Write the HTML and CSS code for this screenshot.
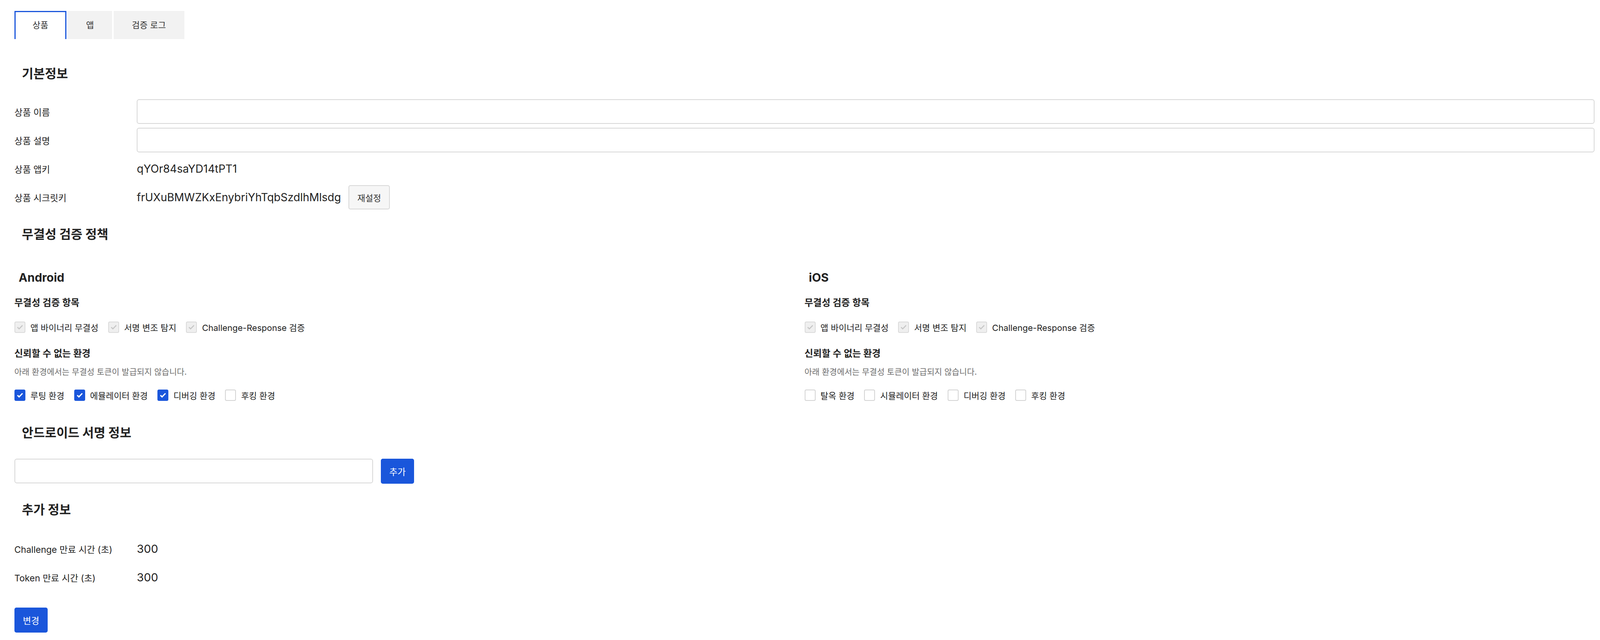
FILE: index.html
```html
<!DOCTYPE html>
<html lang="ko">
	<head>
		<meta charset="UTF-8">
		<title>상품</title>
		<link rel="stylesheet" href="styles.css">
	</head>
	<body>
		<div class="page">
			<ul class="tabs">
				<li class="tab tab-product active">상품</li>
				<li class="tab tab-app">앱</li>
				<li class="tab tab-log">검증 로그</li>
			</ul>

			<!-- 기본정보 -->
			<h2 class="section-title">기본정보</h2>
			<div class="form">
				<div class="row">
					<span class="row-label">상품 이름</span>
					<input class="text-input" type="text">
				</div>
				<div class="row">
					<span class="row-label">상품 설명</span>
					<input class="text-input" type="text">
				</div>
				<div class="row">
					<span class="row-label">상품 앱키</span>
					<span class="row-value">qYOr84saYD14tPT1</span>
				</div>
				<div class="row">
					<span class="row-label">상품 시크릿키</span>
					<div class="row-value">
						<span>frUXuBMWZKxEnybriYhTqbSzdlhMlsdg</span>
						<button class="btn btn-light">재설정</button>
					</div>
				</div>
			</div>

			<!-- 무결성 검증 정책 -->
			<h2 class="section-title">무결성 검증 정책</h2>
			<div class="platforms">
				<div class="platform">
					<h3 class="platform-title">Android</h3>
					<p class="group-label">무결성 검증 항목</p>
					<div class="checks">
						<label class="check"><span class="box disabled"><svg viewBox="0 0 16 16"><path d="M3.4 8.4 6.5 11.4 12.8 4.9"/></svg></span>앱 바이너리 무결성</label>
						<label class="check"><span class="box disabled"><svg viewBox="0 0 16 16"><path d="M3.4 8.4 6.5 11.4 12.8 4.9"/></svg></span>서명 변조 탐지</label>
						<label class="check"><span class="box disabled"><svg viewBox="0 0 16 16"><path d="M3.4 8.4 6.5 11.4 12.8 4.9"/></svg></span>Challenge-Response 검증</label>
					</div>
					<p class="group-label spaced">신뢰할 수 없는 환경</p>
					<p class="note">아래 환경에서는 무결성 토큰이 발급되지 않습니다.</p>
					<div class="checks">
						<label class="check"><span class="box checked"><svg viewBox="0 0 16 16"><path d="M3.4 8.4 6.5 11.4 12.8 4.9"/></svg></span>루팅 환경</label>
						<label class="check"><span class="box checked"><svg viewBox="0 0 16 16"><path d="M3.4 8.4 6.5 11.4 12.8 4.9"/></svg></span>에뮬레이터 환경</label>
						<label class="check"><span class="box checked"><svg viewBox="0 0 16 16"><path d="M3.4 8.4 6.5 11.4 12.8 4.9"/></svg></span>디버깅 환경</label>
						<label class="check"><span class="box"></span>후킹 환경</label>
					</div>
				</div>
				<div class="platform">
					<h3 class="platform-title">iOS</h3>
					<p class="group-label">무결성 검증 항목</p>
					<div class="checks">
						<label class="check"><span class="box disabled"><svg viewBox="0 0 16 16"><path d="M3.4 8.4 6.5 11.4 12.8 4.9"/></svg></span>앱 바이너리 무결성</label>
						<label class="check"><span class="box disabled"><svg viewBox="0 0 16 16"><path d="M3.4 8.4 6.5 11.4 12.8 4.9"/></svg></span>서명 변조 탐지</label>
						<label class="check"><span class="box disabled"><svg viewBox="0 0 16 16"><path d="M3.4 8.4 6.5 11.4 12.8 4.9"/></svg></span>Challenge-Response 검증</label>
					</div>
					<p class="group-label spaced">신뢰할 수 없는 환경</p>
					<p class="note">아래 환경에서는 무결성 토큰이 발급되지 않습니다.</p>
					<div class="checks">
						<label class="check"><span class="box"></span>탈옥 환경</label>
						<label class="check"><span class="box"></span>시뮬레이터 환경</label>
						<label class="check"><span class="box"></span>디버깅 환경</label>
						<label class="check"><span class="box"></span>후킹 환경</label>
					</div>
				</div>
			</div>

			<!-- 안드로이드 서명 정보 -->
			<h2 class="section-title">안드로이드 서명 정보</h2>
			<div class="sign-row">
				<input class="text-input sign-input" type="text">
				<button class="btn btn-primary">추가</button>
			</div>

			<!-- 추가 정보 -->
			<h2 class="section-title">추가 정보</h2>
			<div class="form info">
				<div class="row">
					<span class="row-label">Challenge 만료 시간 (초)</span>
					<span class="row-value num">300</span>
				</div>
				<div class="row">
					<span class="row-label">Token 만료 시간 (초)</span>
					<span class="row-value num">300</span>
				</div>
			</div>

			<button class="btn btn-primary submit">변경</button>
		</div>
	</body>
</html>
```

FILE: styles.css
```css
*{
	margin: 0;
	padding: 0;
	box-sizing: border-box;
}
ul{
	list-style: none;
}
:root{
	/* 가로 치수는 화면 폭에 맞춰 늘어남 (4454 기준 1px) */
	--u: calc(100vw / 4454);
}
body{
	font-family: "Inter", "Noto Sans CJK KR", sans-serif;
	color: #222;
	background: #fff;
}
.page{
	padding: 28px calc(var(--u) * 15) 16px calc(var(--u) * 40);
}

/* 탭 */
.tabs{
	display: flex;
	gap: calc(var(--u) * 4);
	margin-bottom: 65px;
}
.tab{
	height: 72px;
	background: #f2f2f2;
	font-size: 22px;
	line-height: 72px;
	text-align: center;
	color: #333;
}
.tab-product{ width: calc(var(--u) * 145); }
.tab-app{ width: calc(var(--u) * 123); }
.tab-log{ width: calc(var(--u) * 197); }
.tab.active{
	background: #fff;
	border: 3px solid #1a56db;
	border-bottom: none;
	line-height: 66px;
}

/* 섹션 제목 */
.section-title{
	font-size: 32px;
	font-weight: 700;
	line-height: 48px;
	padding-left: calc(var(--u) * 21);
	margin: 40px 0 41px;
}

/* 폼 줄 */
.form{
	display: flex;
	flex-direction: column;
	gap: 10px;
}
.row{
	display: grid;
	grid-template-columns: calc(var(--u) * 341) 1fr;
	align-items: center;
	height: 63px;
}
.row-label{
	font-size: 23px;
}
.row-value{
	display: flex;
	align-items: center;
	gap: calc(var(--u) * 21);
	font-size: 28px;
}
.text-input{
	height: 63px;
	width: 100%;
	border: 2px solid #d7d7d7;
	border-radius: 6px;
	background: #fff;
	font-size: 24px;
	padding: 0 14px;
	outline: none;
}

/* 버튼 */
.btn{
	font-family: inherit;
	font-size: 23px;
	border-radius: 5px;
	cursor: pointer;
}
.btn-light{
	height: 62px;
	width: calc(var(--u) * 115);
	background: #f6f6f6;
	border: 2px solid #d8d8d8;
	color: #333;
	font-size: 22px;
}
.btn-primary{
	height: 64px;
	width: calc(var(--u) * 93);
	background: #1a56db;
	border: none;
	color: #fff;
}

/* 플랫폼 두 칸 */
.platforms{
	display: grid;
	grid-template-columns: 1fr 1fr;
	margin: 66px 0 55px;
}
.platform-title{
	font-size: 30px;
	font-weight: 700;
	line-height: 40px;
	padding-left: calc(var(--u) * 12);
}
.group-label{
	font-size: 24px;
	font-weight: 600;
	line-height: 36px;
	margin-top: 27px;
}
.group-label.spaced{
	margin-top: 32px;
}
.note{
	font-size: 21px;
	line-height: 30px;
	color: #6e6e6e;
	margin-top: 14px;
}
.checks{
	display: flex;
	align-items: center;
	gap: calc(var(--u) * 27);
	height: 36px;
	margin-top: 26px;
}
.check{
	display: flex;
	align-items: center;
	gap: calc(var(--u) * 14);
	font-size: 22px;
}
.box{
	width: 28px;
	height: 29px;
	border: 2px solid #d3d3d3;
	border-radius: 4px;
	background: #fff;
	display: flex;
	align-items: center;
	justify-content: center;
}
.box svg{
	width: 22px;
	height: 22px;
	fill: none;
	stroke: currentColor;
	stroke-width: 2.3;
}
.box.checked{
	background: #1a56db;
	border-color: #1a56db;
	color: #fff;
}
.box.disabled{
	background: #efefef;
	border-color: #dadada;
	color: #c6c6c6;
}
.box.disabled svg{
	stroke-width: 1.9;
}

/* 서명 */
.sign-row{
	display: flex;
	gap: calc(var(--u) * 21);
	margin: 42px 0 43px;
}
.sign-input{
	width: calc(var(--u) * 999);
}

/* 추가 정보 */
.info{
	margin-top: 44px;
}
.num{
	font-size: 29px;
}
.submit{
	margin-top: 46px;
}
```
